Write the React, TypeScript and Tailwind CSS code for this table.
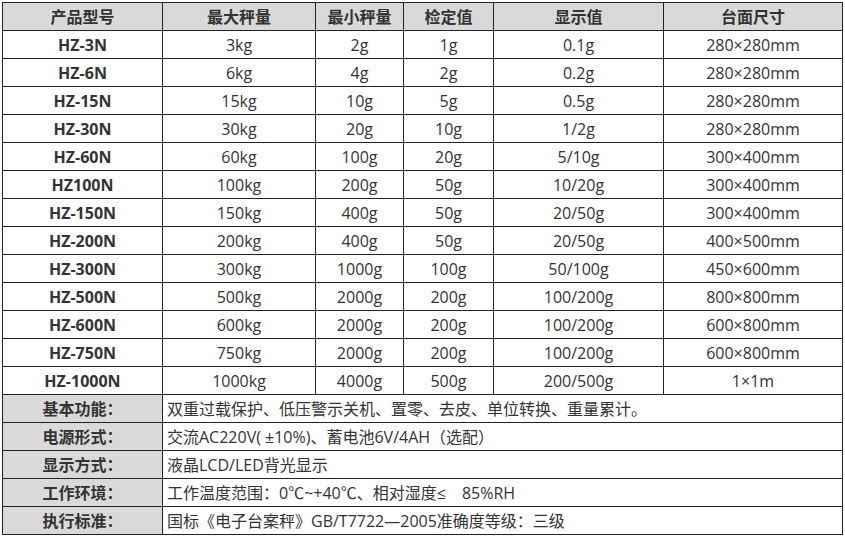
import React from "react";

const rows = [
  ["HZ-3N", "3kg", "2g", "1g", "0.1g", "280×280mm"],
  ["HZ-6N", "6kg", "4g", "2g", "0.2g", "280×280mm"],
  ["HZ-15N", "15kg", "10g", "5g", "0.5g", "280×280mm"],
  ["HZ-30N", "30kg", "20g", "10g", "1/2g", "280×280mm"],
  ["HZ-60N", "60kg", "100g", "20g", "5/10g", "300×400mm"],
  ["HZ100N", "100kg", "200g", "50g", "10/20g", "300×400mm"],
  ["HZ-150N", "150kg", "400g", "50g", "20/50g", "300×400mm"],
  ["HZ-200N", "200kg", "400g", "50g", "20/50g", "400×500mm"],
  ["HZ-300N", "300kg", "1000g", "100g", "50/100g", "450×600mm"],
  ["HZ-500N", "500kg", "2000g", "200g", "100/200g", "800×800mm"],
  ["HZ-600N", "600kg", "2000g", "200g", "100/200g", "600×800mm"],
  ["HZ-750N", "750kg", "2000g", "200g", "100/200g", "600×800mm"],
  ["HZ-1000N", "1000kg", "4000g", "500g", "200/500g", "1×1m"],
];

const specs = [
  ["基本功能：", "双重过载保护、低压警示关机、置零、去皮、单位转换、重量累计。"],
  ["电源形式：", "交流AC220V( ±10%)、蓄电池6V/4AH（选配）"],
  ["显示方式：", "液晶LCD/LED背光显示"],
  ["工作环境：", "工作温度范围：0℃~+40℃、相对湿度≤　85%RH"],
  ["执行标准：", "国标《电子台案秤》GB/T7722—2005准确度等级：三级"],
];

const headers = ["产品型号", "最大秤量", "最小秤量", "检定值", "显示值", "台面尺寸"];

export default function App() {
  return (
    <div
      className="w-[845px] h-[536px] bg-white pt-[2px] pl-[2px]"
      style={{ fontFamily: '"Open Sans", "Noto Sans CJK SC", sans-serif' }}
    >
      <table className="table-fixed border-collapse w-[840px] text-[16px] text-[#333]">
        <colgroup>
          <col className="w-[160px]" />
          <col className="w-[153px]" />
          <col className="w-[88px]" />
          <col className="w-[90px]" />
          <col className="w-[170px]" />
          <col className="w-[179px]" />
        </colgroup>
        <thead>
          <tr className="h-[28px] bg-[#d9d9d9]">
            {headers.map((h) => (
              <th
                key={h}
                className="border border-[#222] text-center font-bold p-0 leading-none"
              >
                {h}
              </th>
            ))}
          </tr>
        </thead>
        <tbody>
          {rows.map((r) => (
            <tr key={r[0]} className="h-[28px]">
              {r.map((c, i) => (
                <td
                  key={i}
                  className={`border border-[#222] text-center p-0 leading-none ${
                    i === 0 ? "font-bold" : ""
                  }`}
                >
                  {c}
                </td>
              ))}
            </tr>
          ))}
          {specs.map(([k, v]) => (
            <tr key={k} className="h-[28px]">
              <td className="border border-[#222] bg-[#d9d9d9] text-center font-bold p-0 leading-none">
                {k}
              </td>
              <td
                colSpan={5}
                className="border border-[#222] text-left pl-[4px] p-0 leading-none"
              >
                {v}
              </td>
            </tr>
          ))}
        </tbody>
      </table>
    </div>
  );
}
